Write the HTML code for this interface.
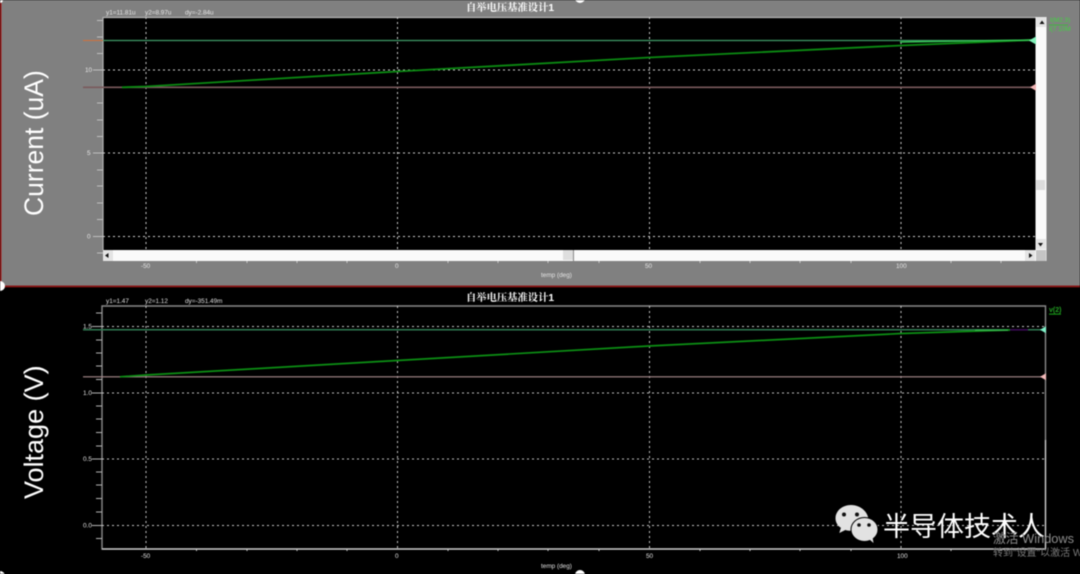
<!DOCTYPE html>
<html><head><meta charset="utf-8"><style>
html,body{margin:0;padding:0;background:#000;width:1080px;height:574px;overflow:hidden}
svg{display:block;font-family:"Liberation Sans","Noto Sans CJK SC",sans-serif;filter:blur(0.4px)}
</style></head><body>
<svg width="1080" height="574" viewBox="0 0 1080 574" xmlns="http://www.w3.org/2000/svg">
<rect width="1080" height="574" fill="#000"/>
<!-- top panel -->
<rect width="1080" height="286" fill="#808080"/>
<rect x="0" y="0" width="1.5" height="286" fill="#9c1c1c"/>
<rect x="0" y="285.5" width="1080" height="1.8" fill="#8a1616"/>
<rect x="103" y="17" width="933" height="234" fill="#000"/>
<path d="M103 17.500H1036M103 17V250" stroke="#b4b4b4" stroke-width="1.200" fill="none"/>
<!-- scrollbars -->
<rect x="1035.5" y="17" width="11" height="244" fill="#fafafa"/>
<rect x="103" y="250" width="943" height="11" fill="#fafafa"/>
<rect x="1036" y="17" width="10" height="10" fill="#e4e4e4"/>
<path d="M1039.500 24l2.500-3.500 2.500 3.500z" fill="#111"/>
<rect x="1036" y="180" width="9" height="10" fill="#dcdcdc"/>
<rect x="1036" y="239" width="10" height="10" fill="#e4e4e4"/>
<path d="M1038 243h5l-2.500 3.500z" fill="#111"/>
<rect x="1036" y="250" width="10" height="11" fill="#c4c4c4"/>
<rect x="103" y="250" width="10" height="11" fill="#e4e4e4"/>
<path d="M108.500 253v5l-3.500-2.500z" fill="#111"/>
<rect x="1025" y="250" width="10" height="11" fill="#e4e4e4"/>
<path d="M1029 253v5l3.500-2.500z" fill="#111"/>
<rect x="563" y="250" width="10" height="10" fill="#dedede"/>
<rect x="573" y="250" width="1" height="11" fill="#888"/>
<!-- top grid -->
<g stroke="#d0d0d0" stroke-width="1" stroke-dasharray="2 3" fill="none">
<path d="M146 17V250M397.500 17V250M649.500 17V250M901 17V250"/>
<path d="M103 70H1035M103 153H1035M103 236.500H1035"/>
</g>
<path d="M97 20.500h6M97 37h6M97 53.500h6M93 70h10M97 103h6M97 120h6M97 136.500h6M93 153h10M97 170h6M97 186h6M97 203h6M97 219.500h6M93 236.500h10M97 253h6" stroke="#c0c0c0" stroke-width="1"/>
<!-- top traces -->
<path d="M83 40.500H103" stroke="#d2703a" stroke-width="1"/>
<path d="M103 40.500H1030" stroke="#3f9a68" stroke-width="1.300"/>
<path d="M83 87.300H1032" stroke="#7a5a5c" stroke-width="1.600"/>
<path d="M122 87.300L146 86.500 397 71.500 649 57.500 901 45.500 1032 40" stroke="#0b8a12" stroke-width="1.800" fill="none"/>
<path d="M900 42L1032 40" stroke="#35c455" stroke-width="1.400"/>
<path d="M1029 40.500l7-4v8z" fill="#7ff0b8"/>
<path d="M1030 87.300l6-3.500v7z" fill="#f0b4b4"/>
<g fill="#e4e4e4" font-size="6.400">
<text x="106" y="14.500">y1=11.81u</text><text x="145" y="14.500">y2=8.97u</text><text x="185" y="14.500">dy=-2.84u</text>
<text x="85" y="72">10</text><text x="87" y="155" >5</text><text x="87" y="238.500">0</text>
<text x="141" y="268">-50</text><text x="395" y="268">0</text><text x="645" y="268">50</text><text x="896" y="268">100</text>
<text x="541" y="277">temp (deg)</text>
</g>
<path d="M196.500 261v2M247 261v2M297 261v2M347 261v2M448 261v2M498 261v2M548 261v2M599 261v2M700 261v2M750 261v2M800 261v2M851 261v2M951 261v2M1001 261v2" stroke="#ccc" stroke-width="1"/>
<text x="466" y="11" fill="#fff" font-size="10.300" font-weight="700" font-family="'Liberation Sans','Noto Serif CJK SC',serif">自举电压基准设计1</text>
<text x="1050" y="22" fill="#3fd63f" font-size="6.400">I(M2,3)</text>
<rect x="1049" y="24.500" width="19" height="1" fill="#3fb83f"/>
<text x="1049" y="31" fill="#3fd63f" font-size="6.400">I(7.10M</text>
<text transform="translate(43 216) rotate(-90)" fill="#fff" font-size="26.500">Current (uA)</text>

<!-- bottom plot -->
<path d="M102 306H1045.500V549H102Z" fill="none" stroke="#8a8a8a" stroke-width="1.400"/>
<path d="M102 549H1045.500M1045.500 440V549" stroke="#d0d0d0" stroke-width="1.200"/>
<g stroke="#c8c8c8" stroke-width="1" stroke-dasharray="2 3" fill="none">
<path d="M146 306V549M397.500 306V549M649.500 306V549M901 306V549"/>
<path d="M102 326.500H1045M102 393H1045M102 459H1045M102 525.500H1045"/>
</g>
<path d="M96 313h6M92 326.500h10M96 340h6M96 353h6M96 366h6M96 379.500h6M92 393h10M96 406h6M96 419h6M96 432.500h6M96 446h6M92 459h10M96 472h6M96 485h6M96 498.500h6M96 512h6M92 525.500h10M96 538.500h6" stroke="#b4b4b4" stroke-width="1"/>
<path d="M196.500 549v2M247 549v2M297 549v2M347 549v2M448 549v2M498 549v2M548 549v2M599 549v2M700 549v2M750 549v2M800 549v2M851 549v2M951 549v2M1001 549v2" stroke="#ccc" stroke-width="1"/>
<path d="M83 329.800H1045" stroke="#2f7a52" stroke-width="1.500"/>
<path d="M83 376.800H1042" stroke="#a88a8c" stroke-width="1.200"/>
<path d="M120 376.800L146 375 397 360.500 649 346 901 333.500 1010 330" stroke="#0c8f14" stroke-width="1.700" fill="none"/>
<path d="M975 330.200H1008" stroke="#36b04c" stroke-width="1.400"/>
<path d="M1010 329.800H1028" stroke="#3a0a55" stroke-width="1.600"/>
<path d="M1040 329.800l6-3.500v7z" fill="#7ff0c8"/>
<path d="M1040 376.800l6-3.500v7z" fill="#f0b8b8"/>
<g fill="#e0e0e0" font-size="6.400">
<text x="106" y="303">y1=1.47</text><text x="145" y="303">y2=1.12</text><text x="185" y="303">dy=-351.49m</text>
<text x="83" y="328.500">1.5</text><text x="83" y="395">1.0</text><text x="83" y="461">0.5</text><text x="83" y="527.500">0.0</text>
<text x="141" y="558">-50</text><text x="395" y="558">0</text><text x="646" y="558">50</text><text x="897" y="558">100</text>
<text x="541" y="568">temp (deg)</text>
</g>
<text x="466" y="301" fill="#fff" font-size="10.300" font-weight="700" font-family="'Liberation Sans','Noto Serif CJK SC',serif">自举电压基准设计1</text>
<text x="1049" y="312" fill="#22a022" font-size="7" font-weight="700">v(2)</text>
<rect x="1049" y="313.500" width="12" height="1.200" fill="#169016"/>
<text transform="translate(43 499) rotate(-90)" fill="#fff" font-size="27">Voltage (V)</text>

<!-- watermark -->
<path d="M851 505c-8.500 0-15.500 5.800-15.500 13.200 0 4 2.100 7.300 5.400 9.600l-1.600 5.200 6-3c1.800.5 3.700.8 5.700.8 1 0 2-.1 3-.2 2-7 8-11.500 14.500-11.300-.9-8-8.400-14.300-17.500-14.300z" fill="#e2e2e2"/>
<circle cx="844" cy="514.500" r="2" fill="#111"/><circle cx="857" cy="514.500" r="2" fill="#111"/>
<ellipse cx="864.500" cy="529.500" rx="13.500" ry="12" fill="#e2e2e2" stroke="#000" stroke-width="1"/>
<path d="M869 539l4.500 4-1-6z" fill="#e2e2e2"/>
<circle cx="859" cy="525" r="1.800" fill="#111"/><circle cx="869" cy="525" r="1.800" fill="#111"/>
<text x="883" y="536" fill="#fff" font-size="27">半导体技术人</text>
<text x="993" y="543" fill="#8c8c8c" font-size="12.800">激活 Windows</text>
<text x="993" y="556" fill="#7c7c7c" font-size="10">转到"设置"以激活 Windows。</text>

<!-- handles -->
<g fill="#fff">
<circle cx="0" cy="0" r="3"/><circle cx="580" cy="-2" r="5"/><circle cx="0" cy="286" r="5"/>
<circle cx="580" cy="575" r="5"/><circle cx="0" cy="576" r="5"/>
</g>
</svg>
</body></html>
